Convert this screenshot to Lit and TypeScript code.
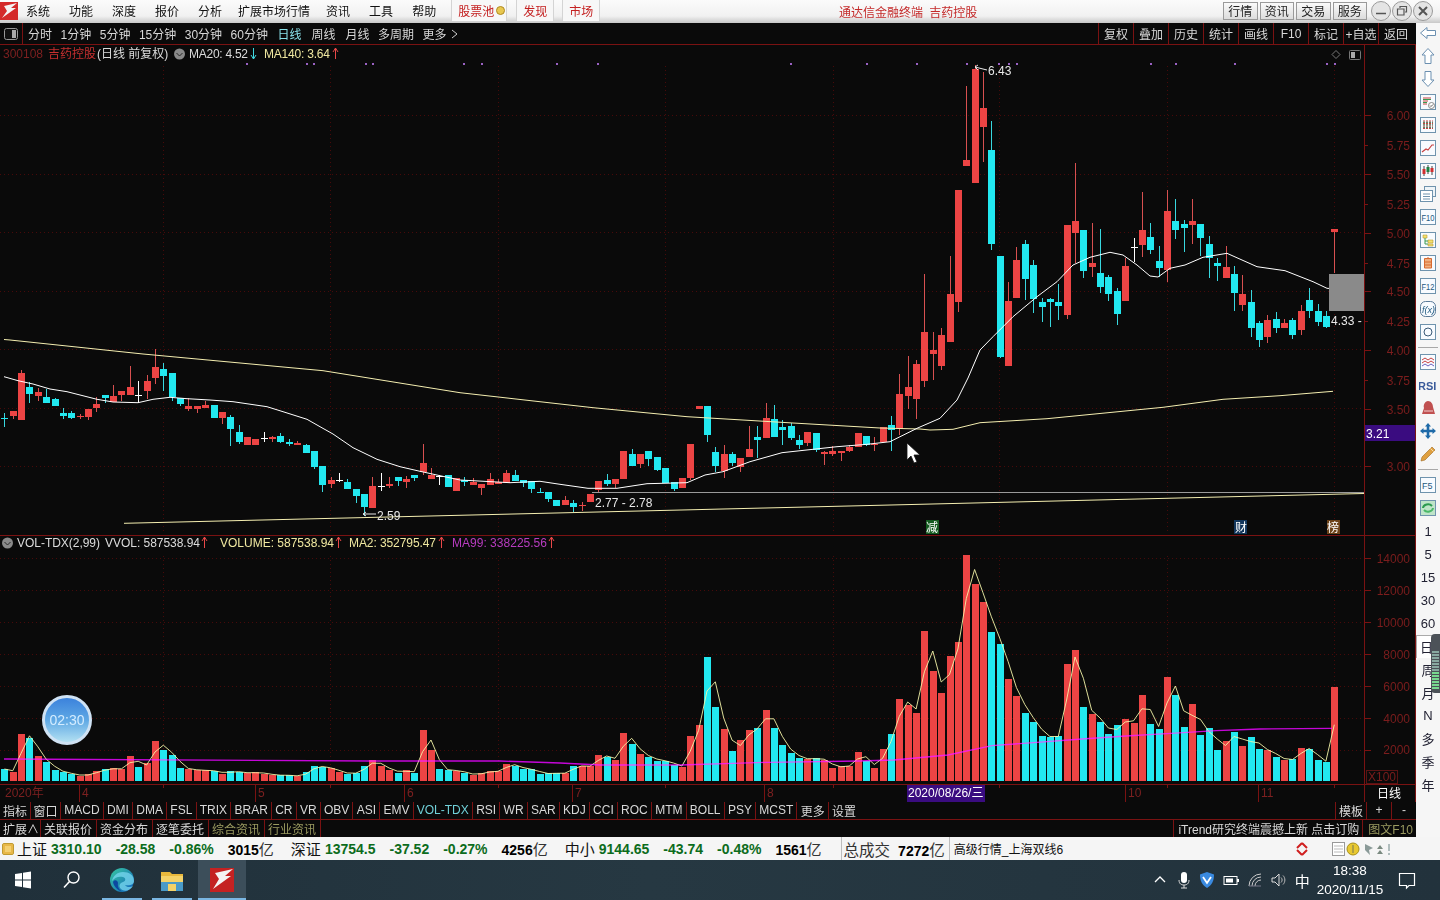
import { LitElement, html, css, svg } from "lit";
import { customElement } from "lit/decorators.js";

type C = [number, number, number, number, number];
// kind (0 red, 1 cyan, 2 white), body top, body bottom, high, low - in chart pixels
const CANDLES: C[] = [
[1,418,419,413,427],[0,411,416,411,419],[0,373,420,370,420],[1,387,394,382,403],[0,392,396,388,401],[1,397,403,389,403],[1,399,406,398,406],[1,413,416,408,419],[1,413,418,411,419],[0,416,417,414,419],
[0,409,417,409,420],[0,404,408,397,412],[1,395,398,395,403],[0,396,402,385,402],[0,391,395,391,401],[0,387,395,366,395],[2,395,396,381,403],[0,381,391,375,399],[0,367,378,349,384],[1,369,376,363,391],
[1,373,397,373,401],[1,398,404,398,406],[0,406,409,398,411],[0,406,409,406,413],[0,405,408,401,408],[1,405,418,405,418],[0,412,418,412,424],[1,417,429,415,446],[1,432,442,425,444],[0,437,445,437,445],
[0,439,445,439,445],[2,438,439,432,442],[0,437,439,436,442],[1,436,442,433,443],[1,442,444,439,446],[0,443,445,441,445],[1,445,453,444,453],[1,451,467,451,469],[1,466,485,466,492],[0,480,484,477,488],
[2,480,481,473,482],[1,482,489,479,489],[1,489,496,489,503],[1,494,507,494,516],[0,486,508,477,508],[2,486,487,473,491],[0,484,486,477,488],[1,477,481,477,486],[0,479,482,476,488],[1,475,478,475,481],
[0,463,472,444,475],[0,475,479,468,479],[2,476,477,475,485],[1,475,487,475,487],[0,478,491,478,491],[1,480,482,477,486],[0,482,485,478,485],[0,484,488,484,495],[0,479,485,473,485],[0,482,484,479,484],
[0,473,483,470,483],[1,475,481,470,481],[1,480,483,480,487],[1,481,489,481,493],[1,492,493,488,493],[1,492,499,492,502],[1,500,506,500,506],[0,500,505,496,505],[1,503,507,500,512],[0,505,506,502,511],
[0,494,502,494,502],[0,481,490,481,492],[1,480,484,474,486],[0,479,484,479,488],[0,451,479,451,479],[1,454,466,449,466],[0,454,464,454,468],[1,451,459,451,466],[1,457,470,457,471],[1,468,483,468,483],
[1,482,489,482,491],[0,478,488,478,488],[0,444,478,444,480],[0,406,409,406,409],[1,406,435,406,442],[1,452,466,447,472],[0,454,471,445,478],[1,454,463,452,466],[0,458,467,458,472],[0,449,457,426,457],
[1,437,440,426,458],[0,418,438,403,438],[1,419,437,405,437],[1,427,430,420,445],[1,426,438,423,440],[1,440,445,435,449],[0,432,443,432,446],[1,433,450,433,452],[0,452,454,451,465],[0,451,454,446,456],
[0,451,453,451,461],[0,447,451,445,452],[0,433,447,433,447],[1,436,445,436,446],[0,444,445,437,451],[0,427,442,427,442],[1,425,430,416,451],[0,394,429,374,435],[0,387,396,356,409],[0,364,399,360,419],
[0,332,381,274,387],[0,350,354,332,380],[0,335,366,328,370],[0,294,342,256,342],[0,190,302,190,312],[0,160,166,86,166],[0,69,183,65,183],[0,108,127,72,162],[1,150,244,121,250],[1,256,357,256,358],
[0,301,366,282,366],[0,260,298,247,298],[1,244,279,240,300],[1,265,299,260,313],[1,302,307,298,322],[1,299,302,298,327],[1,302,306,284,320],[0,225,315,225,319],[0,221,233,163,263],[1,230,271,230,278],
[0,263,267,223,277],[1,273,287,229,293],[1,277,294,275,301],[1,291,314,288,325],[0,266,301,258,301],[2,247,248,238,262],[0,230,245,192,257],[1,237,250,223,254],[1,261,268,246,277],[0,211,270,190,282],
[1,221,230,199,239],[1,224,228,220,252],[0,221,225,199,244],[1,224,238,224,256],[1,244,258,236,278],[1,263,266,258,281],[0,267,278,246,278],[1,274,293,266,311],[0,294,305,275,311],[1,302,328,290,337],
[1,323,340,321,347],[0,320,337,315,343],[1,319,328,312,333],[0,323,328,319,328],[1,320,335,318,339],[0,311,330,305,335],[1,300,311,288,318],[1,311,322,304,326],[1,316,327,311,328],[0,229,232,229,273],
];

const VOL = "c702 r712 r597 c608 r663 c682 c705 c712 c718 r722 r718 r708 c703 r700 r703 r663 c695 r685 r617 c644 c660 c698 r703 r706 r706 c708 r716 c708 c712 r714 r712 r716 r720 c721 c721 r724 c711 c692 c697 r700 r712 c716 c713 c693 r676 r694 r704 c713 r705 c715 r585 r645 c702 c706 r707 c714 r720 r713 r709 r709 r686 c692 c703 c703 c716 c715 c715 r714 c692 r694 r693 r660 c666 r674 r594 c626 r657 c666 c678 c677 c691 r695 r603 r570 c366 c515 r583 c648 r615 r585 c578 r525 c578 c630 c654 c669 r673 c669 r676 r698 r693 r693 r651 c679 r698 r642 c597 r491 r511 r533 r288 r408 r474 r363 r321 r60 r147 r200 c291 c327 r432 r483 c534 c561 c603 c606 c603 r387 r345 c515 r537 c561 c597 c570 r552 r563 r480 c567 c582 r426 c480 c575 r507 c600 c579 c645 r618 c591 r633 c606 c642 r645 c666 r675 c672 r639 c642 c675 c682 r456"
  .split(" ").map((s) => ({ red: s[0] === "r", top: 535 + Number(s.slice(1)) / 3 }));

const MA20 = "4,376.7 18,380.7 33,384 50,389 67,391.7 97,399.3 113,402 138,402.7 153,399.3 170,397.3 187,398.7 210,400 233,401.7 267,406.7 283,411.7 307,419.3 320,426.7 333,434 353,447.7 377,459.3 400,466.7 420,471.3 440,475.7 460,480 510,482.7 540,481.3 560,484.3 588,488.3 617,488.3 647,483.7 687,482.7 705,475 723,471.7 750,461.7 782,452.7 813,449.3 837,446.7 867,444.3 890,441.7 917,428.3 940,418.3 957,400 968,378 980,350 993,336.7 1013,316.7 1037,296.7 1057,281.7 1073,265 1090,257.3 1110,252.3 1123,255 1137,265 1150,276 1158,277 1170,268.3 1185,265 1203,257.3 1227,253.3 1257,266.7 1285,270.7 1313,281.7 1327,288.3 1333,288.7";
const MA140 = "4,339.5 10,340 143,354 323,370.7 460,392.7 593,407.7 687,416.7 793,423 880,428 920,429 930,430 953,429.3 980,422.7 1047,418.7 1163,407.3 1223,399.3 1280,395.7 1333,391.3";
const MA99 = "4,759 370,761 500,761 560,763 600,765 680,765 769,762.3 859,761 894,760 948,755 992,745.7 1037,742.3 1082,739 1126,736 1171,733.3 1216,730.7 1260,729 1332,728.3";
const DOTS = [246, 306, 313, 365, 372, 463, 481, 556, 597, 790, 866, 916, 966, 998, 1008, 1016, 1150, 1175, 1234, 1326, 1334];
const PRICE = [["6.00",115],["5.75",145],["5.50",174],["5.25",204],["5.00",233],["4.75",263],["4.50",291],["4.25",321],["4.00",350],["3.75",380],["3.50",409],["3.00",466]] as [string, number][];
const VOLAX = [["14000",558],["12000",590],["10000",622],["8000",654],["6000",686],["4000",718],["2000",749]] as [string, number][];
const HGRID = [115.5, 174.5, 232.5, 291.5, 349.5, 408.5, 466.5, 558.5, 590.5, 622.5, 654.5, 686.5, 718.5, 750.5];
const VGRID = [163.5, 330.5, 498.5, 665.5, 833.5, 999.5, 1167.5, 1334.5];
const MONTHS = [["4",79],["5",255],["6",404],["7",572],["8",764],["10",1125],["11",1258]] as [string, number][];
const X = (i: number) => Math.round(4.4 + 8.364 * i);

const MENU = ["系统","功能","深度","报价","分析","扩展市场行情","资讯","工具","帮助"];
const PERIODS = ["1分钟","5分钟","15分钟","30分钟","60分钟"];
const TOOLS = ["复权","叠加","历史","统计","画线","F10","标记","+自选","返回"];
const TABS = ["MACD","DMI","DMA","FSL","TRIX","BRAR","CR","VR","OBV","ASI","EMV","VOL-TDX","RSI","WR","SAR","KDJ","CCI","ROC","MTM","BOLL","PSY","MCST","更多","设置"];
const ROW3 = ["扩展∧","关联报价","资金分布","逐笔委托"];
const SIDEBOT = ["1","5","15","30","60","日","周","月","N","多","季","年"];

const box = (inner: unknown) => html`<svg class="ic" viewBox="0 0 18 18"><rect x="1.5" y="1.5" width="15" height="15" fill="#f8fbff" stroke="#6f93ad"/>${inner}</svg>`;
const ICONS_A = [
  html`<svg class="ic" viewBox="0 0 18 18"><path d="M1.5 9 8 3.5V6.5H16.5V11.5H8V14.5Z" fill="#fff" stroke="#6b8fb0"/></svg>`,
  html`<svg class="ic" viewBox="0 0 18 18"><path d="M9 1.5 15 8H12V16.5H6V8H3Z" fill="#fff" stroke="#6b8fb0"/></svg>`,
  html`<svg class="ic" viewBox="0 0 18 18"><path d="M9 16.5 15 10H12V1.5H6V10H3Z" fill="#fff" stroke="#6b8fb0"/></svg>`,
  box(svg`<path d="M4 5H12M4 8H9M4 11H8" stroke="#c84040"/><path d="M4 6.5H12M4 9.5H8" stroke="#3a9a50"/><circle cx="12.5" cy="12.5" r="3" fill="#fff" stroke="#888"/><path d="M11 12.5l1 1 2-2" stroke="#555" fill="none"/>`),
  box(svg`<path d="M4 5H14M4 7.5H14M4 10H14M4 12.5H14" stroke="#c84040" stroke-dasharray="2 1"/><path d="M4 6.3H14M4 8.8H14M4 11.3H14" stroke="#3a6a40" stroke-dasharray="2 1"/>`),
  box(svg`<path d="M3 13 7 10 9 11 13 6 15 6" fill="none" stroke="#c84040" stroke-width="1.2"/>`),
  box(svg`<path d="M5 4V14M9 3V12M13 4V13" stroke="#444"/><rect x="3.5" y="7" width="3" height="5" fill="#d03030"/><rect x="7.5" y="5" width="3" height="5" fill="#208040"/><rect x="11.5" y="6" width="3" height="4" fill="#d03030"/>`),
  html`<svg class="ic" viewBox="0 0 18 18"><rect x="5.5" y="1.5" width="11" height="10" fill="#eef4f8" stroke="#6f93ad"/><rect x="1.5" y="5.5" width="12" height="11" fill="#fff" stroke="#6f93ad"/><path d="M4 9H11M4 11.5H11M4 14H11" stroke="#6f93ad"/></svg>`,
  box(svg`<text x="2.5" y="13" class="ict" textLength="13" lengthAdjust="spacingAndGlyphs">F10</text>`),
  box(svg`<path d="M4 4H8V7H4ZM9 9H14V12H9ZM9 13H14V15H9Z" fill="#f4e070" stroke="#b89a30" stroke-width=".6"/><path d="M6 7V13H9M6 10H9" stroke="#3a9a50" fill="none"/>`),
  box(svg`<path d="M5.5 4.5H12.5V14H5.5ZM5.5 8H12.5M5.5 11H12.5M9 3V5" fill="#f0b080" stroke="#d86a30"/>`),
  box(svg`<text x="2.5" y="13" class="ict" textLength="13" lengthAdjust="spacingAndGlyphs">F12</text>`),
  html`<svg class="ic" viewBox="0 0 18 18"><rect x="1.5" y="1.5" width="15" height="15" rx="5" fill="#f8fbff" stroke="#5a7a98"/><text x="3" y="13" class="ict it">f(x)</text></svg>`,
  box(svg`<circle cx="9" cy="9" r="4" fill="none" stroke="#3a5a78"/>`),
];
const ICONS_B = [
  box(svg`<path d="M3 7 6 5 9 7 12 5 15 7M3 10 6 8 9 10 12 8 15 10" fill="none" stroke="#c84040"/><path d="M3 13 6 11 9 13 12 11 15 13" fill="none" stroke="#6a60c0"/>`),
  html`<svg class="ic" viewBox="0 0 18 18"><text x="-1" y="13.5" class="icrsi">RSI</text></svg>`,
  html`<svg class="ic" viewBox="0 0 18 18"><path d="M9 2C12 2 14 5 14 8L16 15H3L5 9C4 6 6 2 9 2Z" fill="#c05050"/><path d="M5 12H14" stroke="#f0d0d0"/></svg>`,
  html`<svg class="ic" viewBox="0 0 18 18"><path d="M9 1 12 4.5H10.3V7.7H13.5V6L17 9 13.5 12V10.3H10.3V13.5H12L9 17 6 13.5H7.7V10.3H4.5V12L1 9 4.5 6V7.7H7.7V4.5H6Z" fill="#1e6aa8"/></svg>`,
  html`<svg class="ic" viewBox="0 0 18 18"><path d="M13 2 16 5 6 15 2 16 3 12Z" fill="#e0a040" stroke="#a06a20" stroke-width=".6"/><path d="M11.5 3.5 14.5 6.5" stroke="#f4e0b0"/></svg>`,
];
const ICONS_C = [
  box(svg`<text x="3" y="13" class="ict">F5</text>`),
  box(svg`<rect x="2" y="2" width="14" height="14" fill="#bfe4c8"/><path d="M4 9a5 4 0 0 1 9-2" fill="none" stroke="#2c9a50" stroke-width="2"/><path d="M14 9a5 4 0 0 1-9 2" fill="none" stroke="#4ab868" stroke-width="2"/>`),
];

@customElement("app-root")
export class AppRoot extends LitElement {
  static styles = css`
    :host { display: block; width: 1440px; height: 900px; overflow: hidden; background: #0a0a0a; position: relative;
      font-family: "Liberation Sans", "Noto Sans CJK SC", sans-serif; font-size: 12px; color: #d8d8d8; }
    .page { display: flex; flex-direction: column; height: 900px; }

    .title { height: 23px; flex: none; box-sizing: border-box; padding-bottom: 2px; display: flex; align-items: center; color: #111; background: linear-gradient(#fbfbfb, #f1f1f1 70%, #c8c8c8); }
    .logo { width: 18px; height: 18px; margin-right: 8px; flex: none; }
    .menu { display: flex; gap: 19px; }
    .menu .wide { margin: 0 -3px; }
    .chips { display: flex; margin-left: 15px; height: 21px; }
    .chip { color: #c42020; display: flex; align-items: center; gap: 2px; background: #f7f7f7; border-left: 1px solid #d4d4d4; border-right: 1px solid #d4d4d4; padding: 0 6px; margin-right: 8px; }
    .chip.a { padding-right: 1px; margin-right: 9px; }
    .medal { width: 9px; height: 9px; border-radius: 50%; background: #e8c850; border: 1px solid #b08a20; box-sizing: border-box; }
    .caption { position: absolute; left: 839px; top: 3px; color: #c42a2a; word-spacing: 3px; }
    .tbtns { margin-left: auto; display: flex; align-items: center; gap: 2px; }
    .tbtn { width: 34.5px; height: 18px; display: flex; align-items: center; justify-content: center; box-sizing: border-box; border: 1px solid #9a9a9a; background: linear-gradient(#fafafa, #dcdcdc); color: #222; }
    .wins { display: flex; gap: 1px; margin: 0 7px 0 4px; }
    .wins svg { width: 20px; height: 20px; display: block; }

    .body { flex: 1; display: flex; min-height: 0; }
    .left { width: 1416px; flex: none; display: flex; flex-direction: column; position: relative; }

    .tool { height: 22px; flex: none; box-sizing: border-box; display: flex; align-items: center; border-bottom: 1px solid #7a1212; }
    .tool .ticon { width: 23px; height: 100%; box-sizing: border-box; border-right: 1px solid #7a1212; display: flex; align-items: center; justify-content: center; margin-right: 5px; }
    .tool .ticon svg { width: 14px; height: 12px; }
    .periods { display: flex; gap: 8.5px; align-items: center; }
    .periods .on { color: #88e0e8; margin: 0 1.5px 0 1px; }
    .periods .wk { margin-right: 1.5px; }
    .periods .more { display: flex; gap: 4px; align-items: center; }
    .tools { margin-left: auto; display: flex; height: 100%; margin-right: 3px; }
    .tools span { width: 35px; box-sizing: border-box; border-left: 1px solid #7a1212; display: flex; align-items: center; justify-content: center; }

    .chart { display: block; width: 1416px; height: 757px; flex: none; }
    .chart text { font-size: 12px; font-family: "Liberation Sans", "Noto Sans CJK SC", sans-serif; }
    .ax { fill: #7c1d1d; }
    .wt { fill: #dcdcdc; }
    .yl { fill: #f0e8a0; }
    .mg { fill: #b83cc0; }
    .rd { fill: #c83030; }
    .dr { fill: #7c2020; }
    .wh { fill: #e8e8e8; }
    .nn { fill: #fff; }
    .up { fill: none; stroke: #e84848; }
    .dn { fill: none; stroke: #40d8e0; }
    .ma99 { mix-blend-mode: hard-light; }

    .timer { position: absolute; left: 42px; top: 672px; width: 50px; height: 50px; box-sizing: border-box; border-radius: 50%; border: 3px solid #cfe2f4;
      background: linear-gradient(#3b82dc, #5fa8e4 50%, #b2e0f2); color: #d4ecff; font-size: 14px; display: flex; align-items: center; justify-content: center; }

    .tabs { height: 18px; flex: none; box-sizing: border-box; display: flex; align-items: center; border-bottom: 1px solid #7a1212; }
    .tabs span { height: 100%; display: flex; align-items: center; padding: 0 3.2px 1px; border-right: 1px solid #7a1212; box-sizing: border-box; }
    .tabs .first { padding-left: 3px; padding-right: 2.5px; }
    .tabs .noline { border-right: 0; }
    .tabs .on { color: #70d0d8; }
    .tabs .end { margin-left: auto; display: flex; height: 100%; flex: none; }
    .tabs .end span { justify-content: center; white-space: nowrap; flex: none; padding: 0 0 1px; }
    .tabs .end .mb { width: 31px; border-left: 1px solid #7a1212; border-right: 0; }
    .tabs .end .pm { width: 25px; border-left: 1px solid #7a1212; border-right: 0; }
    .news { height: 17px; flex: none; box-sizing: border-box; display: flex; align-items: center; }
    .news span { height: 100%; display: flex; align-items: center; padding: 0 3.5px 1px; border-right: 1px solid #7a1212; box-sizing: border-box; }
    .news .first { padding-left: 3px; padding-right: .5px; }
    .news .ol { color: #9a9a60; }
    .news .end { margin-left: auto; display: flex; height: 100%; }
    .news .end .tk { border-left: 1px solid #7a1212; padding: 0 3px 1px 4px; }
    .news .end .f { border: 0; padding: 0 3px 1px 5px; }

    .side { flex: 1; background: #f6f6f6; display: flex; flex-direction: column; align-items: center; color: #223; position: relative; }
    .side .shift { margin-top: -1.5px; }
    .cell { height: 23px; width: 24px; display: flex; align-items: center; justify-content: center; font-size: 13px; box-sizing: border-box; flex: none; }
    .cell.sel { background: #fff; border: 1px solid #aaa; border-right: 0; border-bottom: 0; width: 18px; margin-right: 6px; justify-content: flex-start; padding-left: 3px; }
    .ic { width: 18px; height: 18px; display: block; }
    .ict { font: 9px "Liberation Sans", sans-serif; fill: #1f5a80; }
    .it { font-style: italic; }
    .icrsi { font: bold 11px "Liberation Sans", sans-serif; fill: #3a5a9a; }
    .sep { height: 7px; width: 20px; flex: none; display: flex; align-items: center; }
    .sep::before { content: ""; flex: 1; height: 1px; background: #a8a8a8; }
    .sep.b { height: 8px; }
    .grip { position: absolute; right: 0; top: 611px; width: 9px; height: 59px; background: #4c5258; border-radius: 4px 0 0 4px; display: flex; flex-direction: column; justify-content: flex-end; gap: 1px; padding: 4px 1px; box-sizing: border-box; }
    .grip i { height: 2px; background: #88a8a0; display: block; flex: none; }
    .grip i.g { background: #78d890; }

    .status { height: 23px; flex: none; background: #f5f5f5; color: #111; display: flex; align-items: center; font-size: 15px; position: relative; }
    .coin { width: 12px; height: 12px; margin: 0 3px 0 2px; border: 1px solid #c09a30; background: #f4d070; box-sizing: border-box; border-radius: 2px; box-shadow: inset 0 0 0 2px #e8b848; flex: none; }
    .grp { display: flex; align-items: center; gap: 14px; margin-right: 17px; }
    .grp .nm { margin-right: -10px; }
    .n { font: bold 14px "Liberation Sans", sans-serif; color: #0c6c1c; }
    .k { font: bold 14px "Liberation Sans", sans-serif; color: #000; }
    .amt { display: flex; align-items: baseline; color: #333; }
    .total { border-left: 1px solid #bdbdbd; border-right: 1px solid #bdbdbd; height: 100%; display: flex; align-items: center; padding: 0 4px 0 2px; gap: 8px; color: #333; margin-left: 2px; font-size: 15.5px; }
    .feed { font-size: 12px; margin-left: 4px; color: #111; }
    .sicons { margin-left: auto; display: flex; align-items: center; gap: 23px; margin-right: 48px; }
    .sicons svg { display: block; }
    .sicons .r { width: 14px; height: 14px; }
    .sicons .g { width: 60px; height: 16px; }

    .task { height: 40px; flex: none; background: linear-gradient(90deg, #20303a, #263842 45%, #22323c); display: flex; align-items: center; gap: 2px; color: #fff; }
    .tc { width: 48px; height: 40px; display: flex; align-items: center; justify-content: center; box-sizing: border-box; flex: none; }
    .tc.st { width: 46px; }
    .tc.open { background: linear-gradient(#7ab6e2, #7ab6e2) no-repeat center bottom / 40px 2px; }
    .tc.act { background: linear-gradient(#7ab6e2, #7ab6e2) no-repeat center bottom / 100% 2px, #3c4e5a; }
    .tc svg { display: block; width: 26px; height: 26px; }
    .tray { margin-left: auto; display: flex; align-items: center; height: 100%; }
    .tray .ti { width: 23.7px; display: flex; justify-content: center; align-items: center; }
    .tray .ti svg { width: 18px; height: 18px; display: block; }
    .tray .zh { font-size: 15px; }
    .clock { width: 72px; margin-right: 1px; display: flex; flex-direction: column; align-items: center; gap: 5px; font-size: 13.5px; line-height: 14px; }
    .notif { width: 40px; display: flex; justify-content: center; margin-right: 13px; }
    .notif svg { width: 20px; height: 20px; display: block; }
  `;

  private chart() {
    const wicks = CANDLES.map((c, i) => {
      const x = X(i);
      const col = c[0] === 0 ? "#d85050" : c[0] === 1 ? "#38d8e0" : "#fff";
      return svg`<rect x=${x} y=${c[3]} width="1" height=${c[4] - c[3]} fill=${col}/>`;
    });
    const bodies = CANDLES.map((c, i) => {
      const x = X(i);
      if (c[0] === 2) return svg`<rect x=${x - 3} y=${c[1]} width="7" height="1" fill="#fff"/>`;
      return svg`<rect x=${x - 3} y=${c[1]} width="7" height=${c[2] - c[1]} fill=${c[0] === 0 ? "#ec4444" : "#22e8f0"}/>`;
    });
    const bars = VOL.map((v, i) => svg`<rect x=${X(i) - 3} y=${Math.round(v.top)} width="7" height=${781 - Math.round(v.top)} fill=${v.red ? "#ec4444" : "#22e8f0"}/>`);
    const ma2 = VOL.map((v, i) => `${(4.4 + 8.364 * i).toFixed(1)},${(i ? (v.top + VOL[i - 1].top) / 2 : v.top).toFixed(1)}`).join(" ");
    const up = (x: number, y: number) => svg`<path class="up" d="M${x + .5} ${y + 11}V${y}M${x - 2} ${y + 4}L${x + .5} ${y}L${x + 3} ${y + 4}"/>`;
    const dn = (x: number, y: number) => svg`<path class="dn" d="M${x + .5} ${y}V${y + 11}M${x - 2} ${y + 7}L${x + .5} ${y + 11}L${x + 3} ${y + 7}"/>`;
    const lens = (cx: number, cy: number) => svg`<circle cx=${cx} cy=${cy} r="5.5" fill="#8a8a8a"/><path d="M${cx - 3} ${cy - 1}L${cx} ${cy + 2}L${cx + 3} ${cy - 1}" fill="none" stroke="#2a2a2a"/>`;
    return html`<svg class="chart" viewBox="0 45 1416 757">
      <g shape-rendering="crispEdges">
        ${HGRID.map((y) => svg`<path d="M0 ${y}H1364" stroke="#480a0a" stroke-dasharray="1 3"/>`)}
        ${VGRID.map((x) => svg`<path d="M${x} 66V534M${x} 556V781" stroke="#480a0a" stroke-dasharray="1 3"/>`)}
        ${DOTS.map((x) => svg`<rect x=${x} y="63" width="2" height="2" fill="#9a62c4"/>`)}
        <path d="M1364.5 45V802M1415.5 45V802M0 535.5H1416M0 784.5H1416" stroke="#7a1212"/>
        ${[115, 174, 233, 291, 350, 409, 466, 558, 590, 622, 654, 686, 718, 750].map((y) => svg`<path d="M1365 ${y + .5}H1371" stroke="#7a1212"/>`)}
        ${[145, 204, 263, 321, 380].map((y) => svg`<path d="M1365 ${y + .5}H1368" stroke="#7a1212"/>`)}
        ${VGRID.map((x) => svg`<path d="M${x} 785V788" stroke="#7a1212"/>`)}
        ${MONTHS.map(([, x]) => svg`<path d="M${x + .5} 785V802" stroke="#7a1212"/>`)}
        <rect x="1365" y="425" width="50" height="16" fill="#3a0c80"/>
        <rect x="1366.5" y="770.5" width="31" height="13" fill="none" stroke="#5a1414"/>
        <rect x="907" y="785" width="78" height="17" fill="#3a0c80"/>
        ${wicks}${bodies}${bars}
      </g>
      <path d="M124 523.3 920 504.3 1364 493.5" fill="none" stroke="#f4eeb0"/>
      <path d="M592 492.5H1364" fill="none" stroke="#9a9a9a" shape-rendering="crispEdges"/>
      <polyline points=${MA140} fill="none" stroke="#f4eeb0"/>
      <polyline points=${MA20} fill="none" stroke="#fff"/>
      <polyline points=${ma2} fill="none" stroke="#f4f4a8" stroke-width=".9"/>
      <polyline class="ma99" points=${MA99} fill="none" stroke="#e13ceb" stroke-width="1.3"/>
      <rect x="1329" y="274" width="35" height="37" fill="#8a8a8a"/>

      <text x="3" y="58" class="dr">300108</text>
      <text x="48" y="58" class="rd">吉药控股</text>
      <text x="97" y="58" class="wt">(日线 前复权)</text>
      ${lens(179.5, 54)}
      <text x="189" y="58" class="wt" textLength="59">MA20: 4.52</text>${dn(253, 48)}
      <text x="264" y="58" class="yl" textLength="66">MA140: 3.64</text>${up(335, 48)}
      <path d="M1336 50.5 1340 54.5 1336 58.5 1332 54.5Z" fill="none" stroke="#777"/>
      <rect x="1349.5" y="50.5" width="11" height="9" rx="1" fill="none" stroke="#777"/><rect x="1351" y="52" width="4" height="6" fill="#aaa"/>

      ${lens(7.5, 543)}
      <text x="17" y="547" class="wt" textLength="83">VOL-TDX(2,99)</text>
      <text x="105" y="547" class="wt" textLength="95">VVOL: 587538.94</text>${up(204, 537)}
      <text x="220" y="547" class="yl" textLength="114">VOLUME: 587538.94</text>${up(338, 537)}
      <text x="349" y="547" class="yl" textLength="87">MA2: 352795.47</text>${up(441, 537)}
      <text x="452" y="547" class="mg" textLength="95">MA99: 338225.56</text>${up(551, 537)}

      <text x="988" y="75" class="wh">6.43</text>
      <path d="M975 67 987 70M975 67l3-2M975 67l3 3" stroke="#e8e8e8" fill="none"/>
      <text x="377" y="520" class="wh">2.59</text>
      <path d="M363 514H376M363 514l3-2M363 514l3 2" stroke="#e8e8e8" fill="none"/>
      <text x="595" y="507" class="wh">2.77 - 2.78</text>
      <text x="1331" y="325" class="wh">4.33 -</text>

      <rect x="926" y="520" width="13" height="14" fill="#145c20"/><text x="926" y="532" class="nn">减</text>
      <rect x="1234" y="520" width="13" height="14" fill="#12365c"/><text x="1235" y="532" class="nn">财</text>
      <rect x="1327" y="520" width="13" height="14" fill="#6c4218"/><text x="1327" y="532" class="nn">榜</text>

      ${PRICE.map(([t, y]) => svg`<text x="1410" y=${y + 4.5} text-anchor="end" class="ax">${t}</text>`)}
      ${VOLAX.map(([t, y]) => svg`<text x="1410" y=${y + 4.5} text-anchor="end" class="ax">${t}</text>`)}
      <text x="1366" y="438" class="nn">3.21</text>
      <text x="1368" y="781" class="ax">X100</text>
      <text x="5" y="797" class="dr">2020年</text>
      ${MONTHS.map(([t, x]) => svg`<text x=${x + 3} y="797" class="dr">${t}</text>`)}
      <text x="908" y="797" class="nn">2020/08/26/三</text>
      <text x="1377" y="798" class="nn">日线</text>

      <path d="M907 443V460L911 456 914 463 917 462 914 455H920Z" fill="#fff" stroke="#111" stroke-width=".8"/>
    </svg>`;
  }

  render() {
    return html`<div class="page">
      <div class="title">
        <svg class="logo" viewBox="0 0 18 18"><rect width="18" height="18" fill="#d42a2a"/><path d="M17 1 4 4 7 9 2 16 16 6 11 6Z" fill="#f4f4f4"/></svg>
        <div class="menu">${MENU.map((m) => html`<span class=${m.length > 2 ? "wide" : ""}>${m}</span>`)}</div>
        <div class="chips">
          <span class="chip a">股票池<i class="medal"></i></span>
          <span class="chip">发现</span>
          <span class="chip">市场</span>
        </div>
        <div class="caption">通达信金融终端 吉药控股</div>
        <div class="tbtns">${["行情","资讯","交易","服务"].map((t) => html`<span class="tbtn">${t}</span>`)}</div>
        <div class="wins">
          <svg viewBox="0 0 20 20"><circle cx="10" cy="10" r="9.5" fill="#e4e4e4" stroke="#999"/><path d="M5 12.5H15" stroke="#555" stroke-width="1.5"/></svg>
          <svg viewBox="0 0 20 20"><circle cx="10" cy="10" r="9.5" fill="#e4e4e4" stroke="#999"/><path d="M8 7V5.5H14.5V11H13M5.5 8H12V14H5.5Z" fill="none" stroke="#555" stroke-width="1.2"/></svg>
          <svg viewBox="0 0 20 20"><circle cx="10" cy="10" r="9.5" fill="#e4e4e4" stroke="#999"/><path d="M6 6 14 14M14 6 6 14" stroke="#555" stroke-width="2"/></svg>
        </div>
      </div>

      <div class="body">
        <div class="left">
          <div class="tool">
            <span class="ticon"><svg viewBox="0 0 14 12"><rect x=".5" y=".5" width="13" height="11" rx="2" fill="#111" stroke="#999"/><rect x="8" y="2" width="4" height="8" fill="#aaa"/></svg></span>
            <div class="periods">
              <span>分时</span>
              ${PERIODS.map((p) => html`<span>${p}</span>`)}
              <span class="on">日线</span><span class="wk">周线</span><span>月线</span><span>多周期</span>
              <span class="more">更多<svg width="7" height="10" viewBox="0 0 7 10"><path d="M1 1 6 5 1 9" fill="none" stroke="#ccc"/></svg></span>
            </div>
            <div class="tools">${TOOLS.map((t) => html`<span>${t}</span>`)}</div>
          </div>

          ${this.chart()}
          <div class="timer">02:30</div>

          <div class="tabs">
            <span class="first">指标</span><span class="first">窗口</span>
            ${TABS.map((t, i) => html`<span class=${t === "VOL-TDX" ? "on" : i === TABS.length - 1 ? "noline" : ""}>${t}</span>`)}
            <div class="end"><span class="mb">模板</span><span class="pm">+</span><span class="pm">-</span></div>
          </div>
          <div class="news">
            ${ROW3.map((t, i) => html`<span class=${i ? "" : "first"}>${t}</span>`)}
            <span class="ol">综合资讯</span><span class="ol">行业资讯</span>
            <div class="end"><span class="tk">iTrend研究终端震撼上新 点击订购</span><span class="f ol">图文F10</span></div>
          </div>
        </div>

        <div class="side">
          ${ICONS_A.map((ic, i) => html`<div class="cell ${i ? "" : "shift"}">${ic}</div>`)}
          <div class="sep"></div>
          ${ICONS_B.map((ic) => html`<div class="cell">${ic}</div>`)}
          <div class="sep b"></div>
          ${ICONS_C.map((ic) => html`<div class="cell">${ic}</div>`)}
          ${SIDEBOT.map((t) => html`<div class="cell ${t === "日" ? "sel" : ""}">${t}</div>`)}
          <div class="grip">${Array.from({ length: 13 }, (_, i) => html`<i class=${i > 6 ? "g" : ""}></i>`)}</div>
        </div>
      </div>

      <div class="status">
        <span class="coin"></span>
        <div class="grp"><span class="nm">上证</span><span class="n">3310.10</span><span class="n">-28.58</span><span class="n">-0.86%</span><span class="amt"><span class="k">3015</span>亿</span></div>
        <div class="grp"><span class="nm">深证</span><span class="n">13754.5</span><span class="n">-37.52</span><span class="n">-0.27%</span><span class="amt"><span class="k">4256</span>亿</span></div>
        <div class="grp"><span class="nm">中小</span><span class="n">9144.65</span><span class="n">-43.74</span><span class="n">-0.48%</span><span class="amt"><span class="k">1561</span>亿</span></div>
        <div class="total"><span>总成交</span><span class="amt"><span class="k">7272</span>亿</span></div>
        <span class="feed">高级行情_上海双线6</span>
        <div class="sicons">
          <svg class="r" viewBox="0 0 14 14"><path d="M7 1 12 6M7 13 2 8" stroke="#d02020" stroke-width="2" fill="none"/><path d="M7 1 2 6M7 13 12 8" stroke="#d02020" stroke-width="2" fill="none"/></svg>
          <svg class="g" viewBox="0 0 60 16"><rect x=".5" y="1.5" width="12" height="13" fill="#fff" stroke="#999"/><path d="M2 5H11M2 8H11M2 11H11" stroke="#bbb"/><circle cx="21" cy="8" r="6" fill="#e8c830" stroke="#a89018"/><path d="M21 4V12" stroke="#775"/><path d="M33 3 41 7 37 9 38 14 33 9Z" fill="#8a9a98"/><path d="M48 4 51 8H45ZM48 9 51 13H45Z" fill="#7a8a80"/><path d="M57 3V10M57 12V14" stroke="#9aa" stroke-width="1.5"/></svg>
        </div>
      </div>

      <div class="task">
        <div class="tc st"><svg viewBox="0 0 26 26"><path d="M5 7 12 6V12.5H5ZM13 5.8 21 4.6V12.5H13ZM5 13.5H12V20L5 19ZM13 13.5H21V21.4L13 20.2Z" fill="#fff"/></svg></div>
        <div class="tc"><svg viewBox="0 0 26 26"><circle cx="14.5" cy="10.5" r="5.5" fill="none" stroke="#fff" stroke-width="1.4"/><path d="M10.5 14.5 5 20.5" stroke="#fff" stroke-width="1.6"/></svg></div>
        <div class="tc open"><svg viewBox="0 0 26 26"><defs><linearGradient id="ed" x1="0" y1="0" x2="1" y2="1"><stop offset="0" stop-color="#38c8a0"/><stop offset="1" stop-color="#1060c0"/></linearGradient></defs><circle cx="13" cy="13" r="12" fill="url(#ed)"/><path d="M25 14C25 8 20 5 14 5 8 5 4 9 3 14 6 10 10 9 14 10 17 11 17 14 14 15 11 16 9 19 12 22 15 25 21 24 24 19 21 21 17 20 16 18 20 19 25 18 25 14Z" fill="#7ad8f0" opacity=".75"/><path d="M9 16C8 20 11 25 16 25 11 25 5 21 4 15 5 12 9 13 9 16Z" fill="#0c48a0"/></svg></div>
        <div class="tc open"><svg viewBox="0 0 26 26"><path d="M2 5H11L13 7H24V24H2Z" fill="#e8b83c"/><rect x="2" y="9" width="22" height="15" fill="#f4d268"/><rect x="2" y="15" width="22" height="9" fill="#4a9ac8"/><rect x="9" y="17" width="8" height="7" fill="#f4d268"/></svg></div>
        <div class="tc act"><svg viewBox="0 0 26 26"><rect x="1" y="1" width="24" height="24" fill="#c42222"/><path d="M24 2 6 6 10 12 4 22 22 9 16 9Z" fill="#f4f4f4"/></svg></div>

        <div class="tray">
          <span class="ti"><svg viewBox="0 0 18 18"><path d="M4 11 9 6 14 11" fill="none" stroke="#fff" stroke-width="1.3"/></svg></span>
          <span class="ti"><svg viewBox="0 0 18 18"><rect x="6" y="1" width="6" height="11" rx="3" fill="#fff"/><path d="M4 9C4 13 6.5 14 9 14S14 13 14 9M9 14V17M6 17H12" fill="none" stroke="#ddd"/></svg></span>
          <span class="ti"><svg viewBox="0 0 18 18"><path d="M9 1 16 3.5C16 10 14 14 9 17 4 14 2 10 2 3.5Z" fill="#3a8ae0"/><path d="M5 6 9 12 13 6" fill="none" stroke="#fff" stroke-width="1.8"/></svg></span>
          <span class="ti"><svg viewBox="0 0 18 18"><rect x="2" y="5.5" width="13" height="8" fill="none" stroke="#fff"/><rect x="4" y="7.5" width="7" height="4" fill="#fff"/><rect x="15" y="8" width="2" height="3" fill="#fff"/></svg></span>
          <span class="ti"><svg viewBox="0 0 18 18"><path d="M3 15A12 12 0 0 1 15 3M6 15A9 9 0 0 1 15 6M9 15A6 6 0 0 1 15 9" fill="none" stroke="#ccc"/><path d="M3 15 15 15" stroke="#778"/></svg></span>
          <span class="ti"><svg viewBox="0 0 18 18"><path d="M3 7H6L10 3V15L6 11H3Z" fill="none" stroke="#ddd"/><path d="M12 6.5C13.5 8 13.5 10 12 11.5M14 4.5C16.5 7 16.5 11 14 13.5" fill="none" stroke="#bbb"/></svg></span>
          <span class="ti zh">中</span>
          <div class="clock"><span>18:38</span><span>2020/11/15</span></div>
          <div class="notif"><svg viewBox="0 0 20 20"><path d="M2.5 3.5H17.5V15.5H12L9.5 18V15.5H2.5Z" fill="none" stroke="#fff" stroke-width="1.2"/></svg></div>
        </div>
      </div>
    </div>`;
  }
}
